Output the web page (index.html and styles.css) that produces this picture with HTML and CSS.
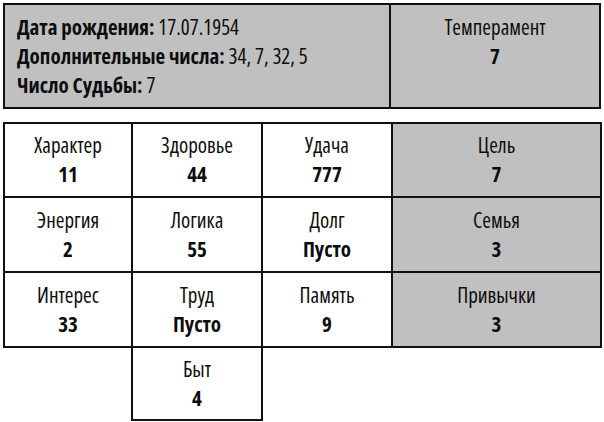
FILE: index.html
```html
<!DOCTYPE html>
<html lang="ru">
<head>
<meta charset="utf-8">
<link rel="stylesheet" href="styles.css">
</head>
<body>
<div class="page">
  <div class="summary">
    <div class="info">
      <div class="line"><b>Дата рождения:</b> 17.07.1954</div>
      <div class="line"><b>Дополнительные числа:</b> 34, 7, 32, 5</div>
      <div class="line"><b>Число Судьбы:</b> 7</div>
    </div>
    <div class="temper">
      <div class="label">Темперамент</div>
      <div class="value">7</div>
    </div>
  </div>
  <table class="matrix">
    <colgroup>
      <col class="c1"><col class="c2"><col class="c3"><col class="c4">
    </colgroup>
    <tr class="first">
      <td><div class="label">Характер</div><div class="value">11</div></td>
      <td><div class="label">Здоровье</div><div class="value">44</div></td>
      <td><div class="label">Удача</div><div class="value">777</div></td>
      <td class="gray"><div class="label">Цель</div><div class="value">7</div></td>
    </tr>
    <tr>
      <td><div class="label">Энергия</div><div class="value">2</div></td>
      <td><div class="label">Логика</div><div class="value">55</div></td>
      <td><div class="label">Долг</div><div class="value">Пусто</div></td>
      <td class="gray"><div class="label">Семья</div><div class="value">3</div></td>
    </tr>
    <tr>
      <td><div class="label">Интерес</div><div class="value">33</div></td>
      <td><div class="label">Труд</div><div class="value">Пусто</div></td>
      <td><div class="label">Память</div><div class="value">9</div></td>
      <td class="gray"><div class="label">Привычки</div><div class="value">3</div></td>
    </tr>
    <tr class="last">
      <td class="empty"></td>
      <td><div class="label">Быт</div><div class="value">4</div></td>
      <td class="empty"></td>
      <td class="empty"></td>
    </tr>
  </table>
</div>
</body>
</html>
```
FILE: styles.css
```css
html, body {
  margin: 0;
  padding: 0;
  background: #fff;
}
body {
  font-family: "Open Sans", "Liberation Sans Narrow", "DejaVu Sans Condensed", sans-serif;
  font-stretch: 75%;
  font-size: 21px;
  line-height: 29px;
  color: #0d0d0d;
}
.page {
  padding: 3px 0 0 3px;
}
.summary {
  display: flex;
  width: 598px;
  height: 106px;
  box-sizing: border-box;
  border: 2px solid #111;
  background: #c0c0c0;
}
.info {
  flex: 1;
  padding: 8px 0 0 12px;
}
.info b {
  font-weight: 700;
}
.temper {
  width: 208px;
  border-left: 2px solid #111;
  padding-top: 8px;
  text-align: center;
}
.value {
  font-weight: 700;
}
.matrix {
  margin-top: 13px;
  border-collapse: collapse;
  table-layout: fixed;
  width: 597px;
}
.c1 { width: 128px; }
.c2 { width: 130px; }
.c3 { width: 130px; }
.c4 { width: 209px; }
.matrix tr {
  height: 75px;
}
.matrix tr.first {
  height: 74px;
}
.matrix tr.last {
  height: 73px;
}
.matrix td {
  border: 2px solid #111;
  text-align: center;
  vertical-align: middle;
  padding: 0;
}
.matrix td.gray {
  background: #c0c0c0;
}
.matrix td.empty {
  border: none;
}
```
